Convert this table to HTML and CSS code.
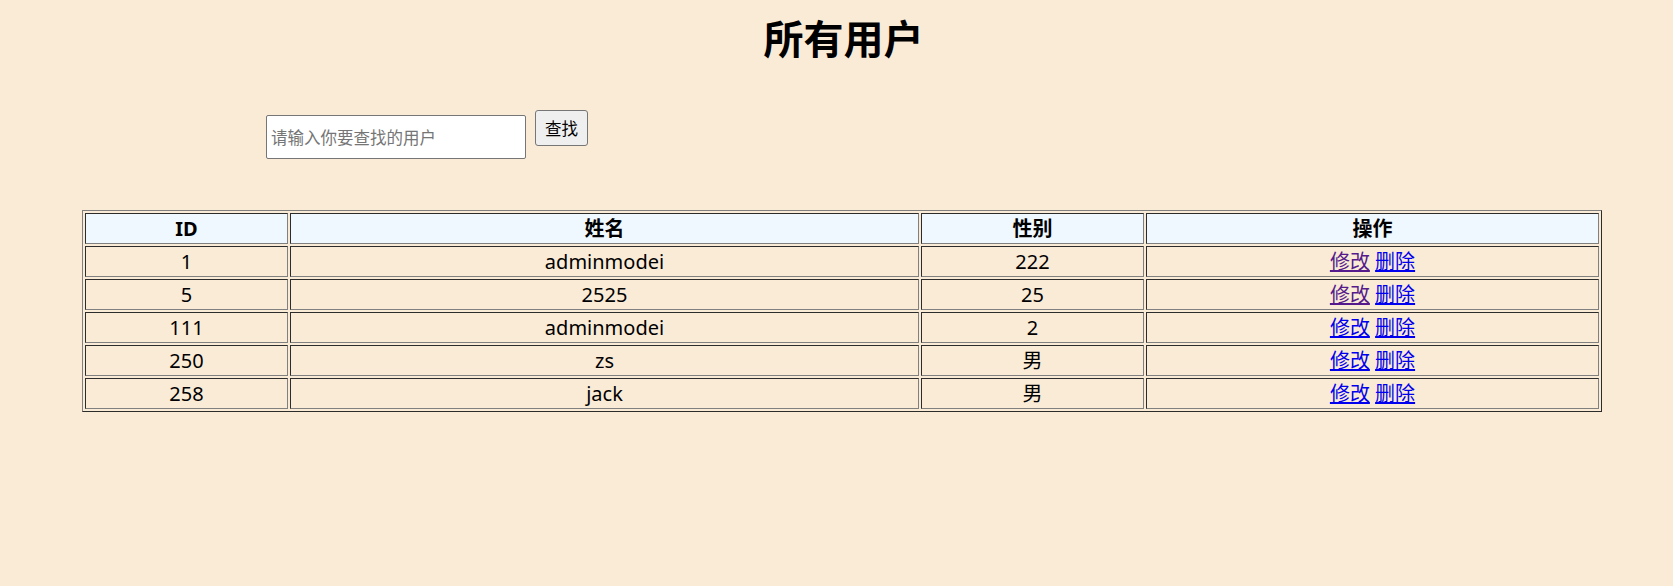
FILE: index.html
```html
<!DOCTYPE html>
<html lang="zh-CN">
<head>
<meta charset="utf-8">
<title>所有用户</title>
<link rel="stylesheet" href="styles.css">
</head>
<body>
<h1 class="title">所有用户</h1>
<form class="search" onsubmit="return false">
  <input class="search-input" type="text" placeholder="请输入你要查找的用户">
  <button class="search-btn" type="submit">查找</button>
</form>
<table class="users">
  <thead>
    <tr>
      <th class="c-id">ID</th>
      <th class="c-name">姓名</th>
      <th class="c-sex">性别</th>
      <th class="c-op">操作</th>
    </tr>
  </thead>
  <tbody>
    <tr><td>1</td><td>adminmodei</td><td>222</td><td><a class="link visited" href="#">修改</a> <a class="link" href="#">删除</a></td></tr>
    <tr><td>5</td><td>2525</td><td>25</td><td><a class="link visited" href="#">修改</a> <a class="link" href="#">删除</a></td></tr>
    <tr><td>111</td><td>adminmodei</td><td>2</td><td><a class="link" href="#">修改</a> <a class="link" href="#">删除</a></td></tr>
    <tr><td>250</td><td>zs</td><td>男</td><td><a class="link" href="#">修改</a> <a class="link" href="#">删除</a></td></tr>
    <tr><td>258</td><td>jack</td><td>男</td><td><a class="link" href="#">修改</a> <a class="link" href="#">删除</a></td></tr>
  </tbody>
</table>
</body>
</html>
```
FILE: styles.css
```css
html, body {
  background: #faebd7;
}
body {
  margin: 8px;
  font-family: "Noto Sans", "Noto Sans CJK SC", sans-serif;
  color: #000;
}
.title {
  margin: 0;
  padding-left: 14px;
  text-align: center;
  font-family: "Noto Sans CJK SC", sans-serif;
  font-size: 40px;
  line-height: 58px;
  font-weight: bold;
}
.search {
  display: flex;
  align-items: flex-start;
  gap: 9px;
  margin: 44px 0 0 258px;
}
.search-input {
  box-sizing: border-box;
  width: 260px;
  height: 44px;
  margin: 5px 0 0 0;
  padding: 1px 4px;
  border: 1px solid #767676;
  border-radius: 2px;
  background: #fff;
  font-family: "Noto Sans CJK SC", sans-serif;
  font-size: 16.5px;
}
.search-input::placeholder {
  color: #757575;
}
.search-btn {
  box-sizing: border-box;
  width: 53px;
  height: 36px;
  margin: 0;
  padding: 0;
  border: 1px solid #767676;
  border-radius: 3px;
  background: #efefef;
  color: #000;
  font-family: "Noto Sans CJK SC", sans-serif;
  font-size: 16.5px;
}
.users {
  margin: 51px 0 0 74px;
  width: 1520px;
  table-layout: fixed;
  border-collapse: separate;
  border-spacing: 2px;
  border: 1px outset #808080;
}
.users th, .users td {
  box-sizing: border-box;
  height: 31px;
  border: 1px inset #808080;
  padding: 1px;
  font-size: 20px;
  line-height: 27px;
  text-align: center;
  vertical-align: middle;
}
.users th {
  background: #f0f8ff;
  font-weight: bold;
}
.c-id { width: 203px; }
.c-name { width: 629px; }
.c-sex { width: 223px; }
.c-op { width: 453px; }
.link {
  color: #0000ee;
  text-decoration: underline;
}
.link.visited {
  color: #551a8b;
}
```
